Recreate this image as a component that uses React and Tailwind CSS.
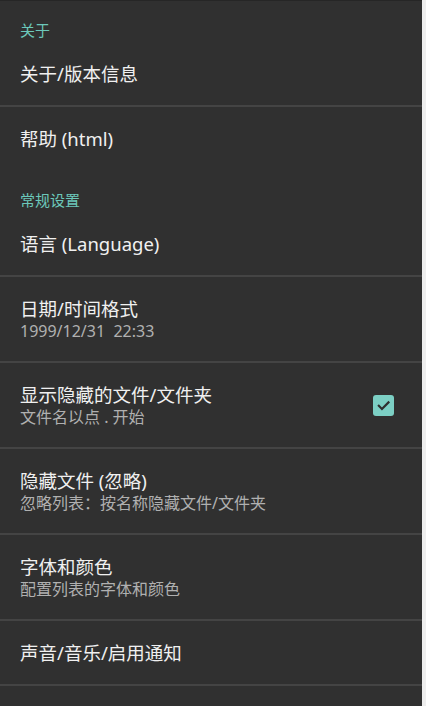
const FONT = { fontFamily: '"Noto Sans", "Noto Sans CJK SC", sans-serif' };

function Header({ children }) {
  return (
    <div className="h-[42px] pt-[21px] pl-5 text-[15px] leading-[18px] text-[#6cc8ba]">
      {children}
    </div>
  );
}

function Divider() {
  return <div className="h-[2px] bg-[#444444]" />;
}

function Row({ title }) {
  return (
    <div className="h-[63px] flex items-center px-5 text-[18.5px] leading-6 text-[#f0f0f0]">
      {title}
    </div>
  );
}

function TwoLineRow({ title, subtitle, checked }) {
  return (
    <div className="h-[84px] flex items-center justify-between pl-5 pr-[28px]">
      <div className="flex flex-col">
        <span className="text-[18.5px] leading-6 text-[#f0f0f0]">{title}</span>
        <span className="text-[16px] leading-5 text-[#b0b0b0] whitespace-pre">{subtitle}</span>
      </div>
      {checked && (
        <div className="w-[21px] h-[21px] rounded-[3px] bg-[#7ccfc4] flex items-center justify-center">
          <svg width="15" height="15" viewBox="0 0 24 24" fill="none" stroke="#2f2f2f" strokeWidth="3.4" strokeLinecap="square">
            <path d="M4.5 12.5l5 5L20 7" />
          </svg>
        </div>
      )}
    </div>
  );
}

export default function App() {
  return (
    <div className="w-[426px] h-[706px] flex bg-[#eeeeee] overflow-hidden" style={FONT}>
      <div className="w-[422px] h-full bg-[#303030] shadow-[inset_0_1px_0_#262626]">
        <Header>关于</Header>
        <Row title="关于/版本信息" />
        <Divider />
        <Row title="帮助 (html)" />
        <Header>常规设置</Header>
        <Row title="语言 (Language)" />
        <Divider />
        <TwoLineRow title="日期/时间格式" subtitle="1999/12/31  22:33" />
        <Divider />
        <TwoLineRow title="显示隐藏的文件/文件夹" subtitle="文件名以点 . 开始" checked />
        <Divider />
        <TwoLineRow title="隐藏文件 (忽略)" subtitle="忽略列表：按名称隐藏文件/文件夹" />
        <Divider />
        <TwoLineRow title="字体和颜色" subtitle="配置列表的字体和颜色" />
        <Divider />
        <Row title="声音/音乐/启用通知" />
        <Divider />
      </div>
    </div>
  );
}
